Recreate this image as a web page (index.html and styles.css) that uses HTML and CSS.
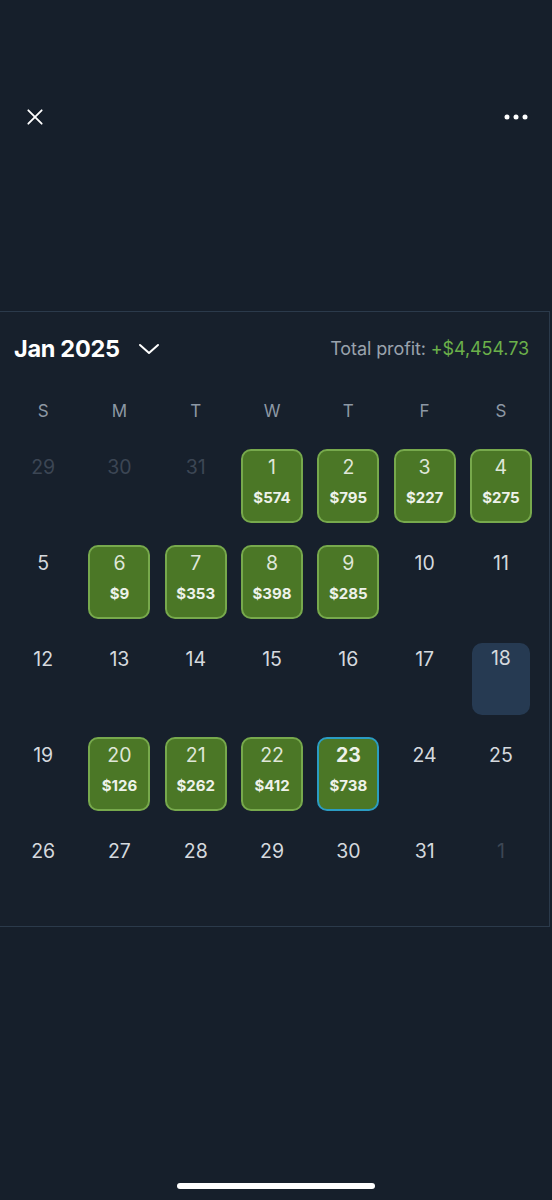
FILE: index.html
```html
<!DOCTYPE html>
<html lang="en">
<head>
  <meta charset="UTF-8">
  <title>Profit calendar</title>
  <meta name="viewport" content="width=device-width, initial-scale=1.0">
  <link rel="stylesheet" href="styles.css">
</head>
<body>
  <div class="topbar">
    <svg class="icon" width="24" height="24" viewBox="0 0 24 24">
      <path d="M4 4 L20 20 M20 4 L4 20" stroke="#fff" stroke-width="2.2" stroke-linecap="round" fill="none"/>
    </svg>
    <svg class="icon" width="24" height="24" viewBox="0 0 24 24">
      <circle cx="3" cy="12" r="2.5" fill="#fff"/>
      <circle cx="12" cy="12" r="2.5" fill="#fff"/>
      <circle cx="21" cy="12" r="2.5" fill="#fff"/>
    </svg>
  </div>

  <div class="card">
    <div class="card-head">
      <div class="month">
        Jan 2025
        <svg width="22" height="14" viewBox="0 0 22 14">
          <path d="M2 3 L11 11 L20 3" stroke="#fff" stroke-width="2" fill="none" stroke-linecap="round" stroke-linejoin="round"/>
        </svg>
      </div>
      <div class="total">Total profit: <span class="plus">+$4,454.73</span></div>
    </div>

    <div class="weekdays">
      <span>S</span><span>M</span><span>T</span><span>W</span><span>T</span><span>F</span><span>S</span>
    </div>

    <div class="days" id="days"></div>
  </div>

  <div class="home-bar"></div>

  <script>
    // дни месяца и прибыль
    const profit = {1: 574, 2: 795, 3: 227, 4: 275, 6: 9, 7: 353, 8: 398, 9: 285,
                    20: 126, 21: 262, 22: 412, 23: 738};
    const today = 23, selected = 18;
    const days = document.getElementById('days');
    const list = [];
    [29, 30, 31].forEach(d => list.push({d, muted: true}));
    for (let d = 1; d <= 31; d++) list.push({d});
    list.push({d: 1, muted: true});

    list.forEach(item => {
      const cell = document.createElement('div');
      cell.className = 'day';
      const num = document.createElement('div');
      num.className = 'num';
      num.textContent = item.d;
      cell.appendChild(num);
      if (item.muted) {
        cell.classList.add('muted');
      } else {
        if (profit[item.d] !== undefined) {
          cell.classList.add('win');
          const amt = document.createElement('div');
          amt.className = 'amt';
          amt.textContent = '$' + profit[item.d];
          cell.appendChild(amt);
        }
        if (item.d === today) cell.classList.add('today');
        if (item.d === selected) cell.classList.add('selected');
      }
      days.appendChild(cell);
    });
  </script>
</body>
</html>
```

FILE: styles.css
```css
html, body {
  margin: 0;
  padding: 0;
}
body {
  background: #161f2b;
  width: 552px;
  height: 1200px;
  position: relative;
  overflow: hidden;
  font-family: Inter, "Noto Sans", sans-serif;
  color: #d5d9de;
}
.topbar {
  display: flex;
  justify-content: space-between;
  padding: 105px 24px 0 25px;
}
.icon {
  display: block;
}
.topbar .icon:first-child {
  width: 20px;
  height: 20px;
  margin-top: 2px;
}
/* карточка календаря */
.card {
  margin-top: 182px;
  width: 549px;
  border: 1px solid #2b3a4b;
  border-left: none;
  background: #17202c;
  padding-bottom: 19px;
}
.card-head {
  display: flex;
  align-items: center;
  justify-content: space-between;
  height: 30px;
  padding: 21px 20px 0 14px;
}
.month {
  display: flex;
  align-items: center;
  gap: 18px;
  color: #fff;
  font-weight: 700;
  font-size: 23.5px;
  letter-spacing: -0.3px;
}
.month svg {
  margin-top: 2px;
}
.total {
  color: #9aa3ad;
  font-size: 18px;
  letter-spacing: -0.1px;
}
.total .plus {
  color: #6bb04a;
}
.weekdays {
  display: grid;
  grid-template-columns: repeat(7, 76.3px);
  padding-left: 5px;
  margin-top: 36px;
  height: 24px;
  align-items: center;
  text-align: center;
  color: #8d98a4;
  font-size: 17px;
}
.days {
  display: grid;
  grid-template-columns: repeat(7, 76.3px);
  grid-auto-rows: 74px;
  row-gap: 22px;
  padding-left: 5px;
  margin-top: 26px;
  justify-items: center;
}
.day {
  width: 62px;
  height: 74px;
  box-sizing: border-box;
  border-radius: 10px;
  border: 2px solid transparent;
  display: flex;
  flex-direction: column;
  align-items: center;
}
.day .num {
  margin-top: 3.5px;
  font-size: 19.5px;
  line-height: 24px;
  color: #d5d9de;
}
.day .amt {
  margin-top: 9.5px;
  font-size: 15px;
  font-weight: 700;
  color: #eef2ea;
}
.day.muted .num {
  color: #3c4654;
}
.day.win {
  background: #4b7726;
  border-color: #77a94c;
}
.day.win .num {
  color: #dfe6d8;
}
.day.today {
  border-color: #2b9cc2;
}
.day.today .num {
  font-weight: 700;
  color: #eef2ea;
}
.day.selected {
  width: 58px;
  height: 72px;
  margin-top: 2px;
  background: #263a52;
}
.day.selected .num {
  margin-top: 1px;
}
.home-bar {
  position: absolute;
  left: 177px;
  bottom: 11px;
  width: 198px;
  height: 6px;
  border-radius: 3px;
  background: #fff;
}
```
